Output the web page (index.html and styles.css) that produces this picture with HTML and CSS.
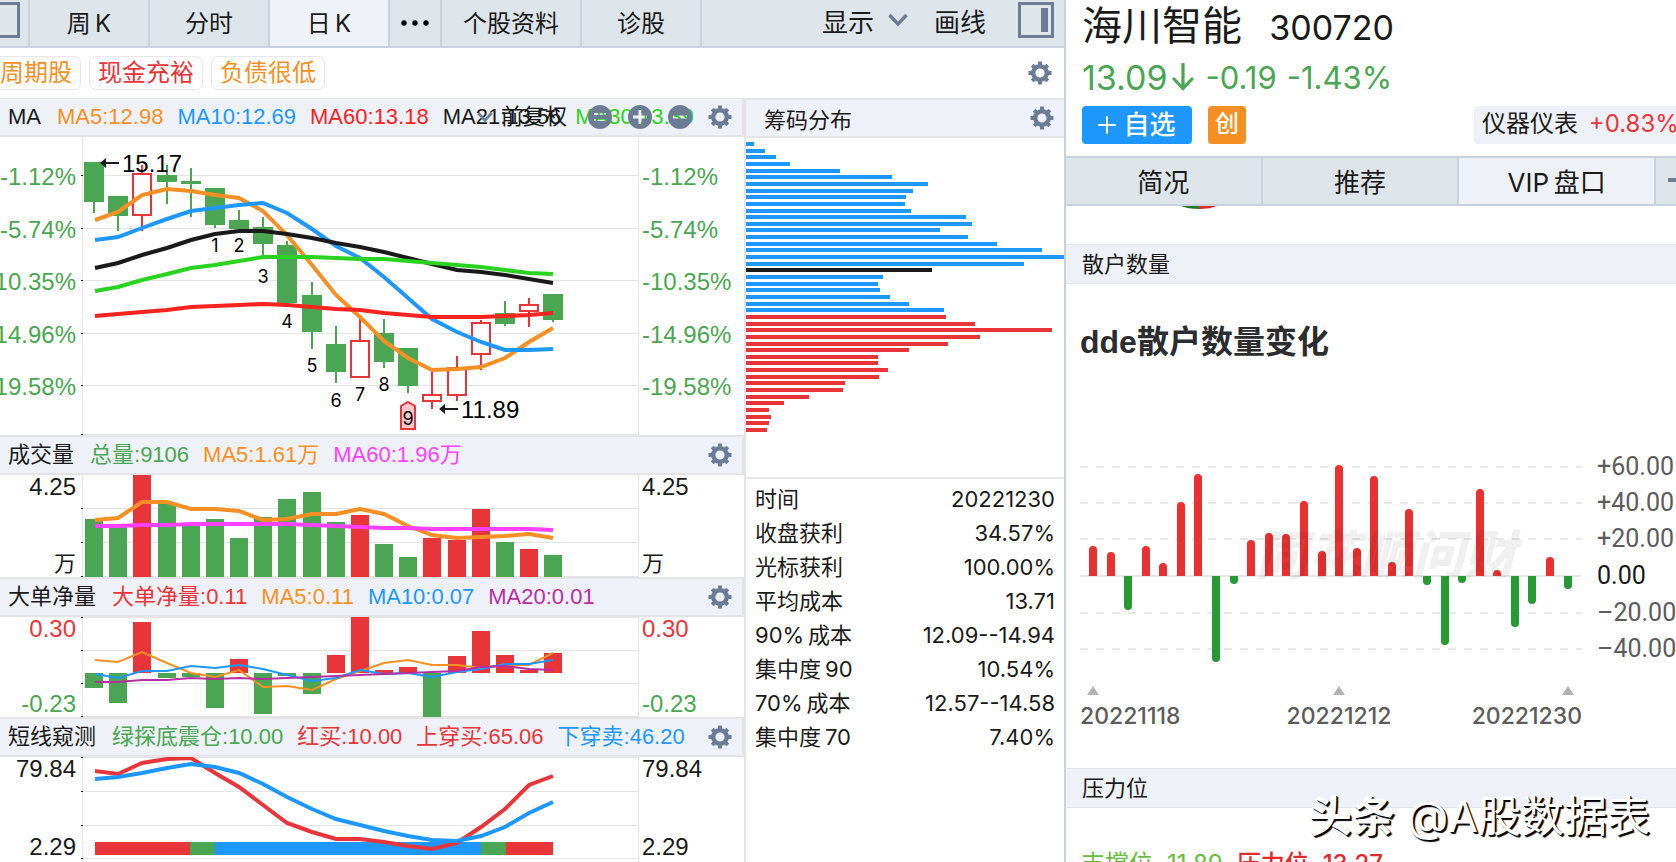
FILE: index.html
```
<!DOCTYPE html>
<html lang="zh-CN">
<head>
  <meta charset="UTF-8">
  <meta name="viewport" content="width=device-width, initial-scale=1.0">
  <title>海川智能 300720</title>
  <link rel="stylesheet" href="styles.css">
</head>
<body>
  <!-- 公用图标 -->
  <svg class="symbols" aria-hidden="true">
    <symbol id="gear" viewBox="0 0 24 24">
      <circle cx="12" cy="12" r="6.8" fill="none" stroke="currentColor" stroke-width="4.4"/>
      <path d="M12 .5v5M12 18.500v5M.5 12h5M18.500 12h5M4.200 4.200l3 3M16.800 16.800l3 3M19.800 4.200l-3 3M7.200 16.800l-3 3" stroke="currentColor" stroke-width="4"/>
    </symbol>
    <symbol id="chevron" viewBox="0 0 20 14">
      <path d="M1.500 2l8.500 9 8.500-9" fill="none" stroke="currentColor" stroke-width="3.400"/>
    </symbol>
  </svg>

  <div class="page">
    <main class="left">
      <nav class="toolbar">
        <button class="side-btn" aria-label="左侧栏">
          <svg width="36" height="36" viewBox="0 0 36 36"><path d="M1.500 1.500h33v33h-33z" fill="none" stroke="#6c7c95" stroke-width="3"/></svg>
        </button>
        <button class="tab">周&thinsp;K</button>
        <button class="tab">分时</button>
        <button class="tab active">日&thinsp;K</button>
        <button class="tab more" aria-label="更多">
          <svg width="30" height="8" viewBox="0 0 30 8"><circle cx="4" cy="4" r="2.700"/><circle cx="15" cy="4" r="2.700"/><circle cx="26" cy="4" r="2.700"/></svg>
        </button>
        <button class="tab wide">个股资料</button>
        <button class="tab">诊股</button>
        <div class="tools">
          <button class="tool">显示 <svg class="chevron" width="20" height="14"><use href="#chevron"/></svg></button>
          <button class="tool">画线</button>
          <button class="tool" aria-label="右侧栏">
            <svg width="36" height="36" viewBox="0 0 36 36"><path d="M1.500 1.500h33v33h-33z" fill="none" stroke="#6c7c95" stroke-width="3"/><path d="M23 6h7v24h-7z" fill="#6c7c95"/></svg>
          </button>
        </div>
      </nav>

      <div class="tags">
        <a class="tag orange" href="#">周期股</a>
        <a class="tag red" href="#">现金充裕</a>
        <a class="tag orange" href="#">负债很低</a>
        <button class="gear" aria-label="标签设置"><svg width="24" height="24"><use href="#gear"/></svg></button>
      </div>

      <div class="content">
        <div class="charts">
          <section class="panel price">
            <header class="panel-head">
              <h2>MA</h2>
              <span class="orange">MA5:12.98</span>
              <span class="blue">MA10:12.69</span>
              <span class="pure-red">MA60:13.18</span>
              <span class="black">MA21:13.56</span>
              <span class="lime">MA30:13.39</span>
              <div class="head-tools">
                <svg class="chevron" width="16" height="12"><use href="#chevron"/></svg>
                <select aria-label="复权方式"><option>前复权</option></select>
                <button class="round" aria-label="重置"><svg width="24" height="24"><path fill-rule="evenodd" d="M12 0a12 12 0 1 1 0 24a12 12 0 1 1 0-24zM6 8v2h12V8zM6 14v2h12v-2z"/></svg></button>
                <button class="round" aria-label="放大"><svg width="24" height="24"><path fill-rule="evenodd" d="M12 0a12 12 0 1 1 0 24a12 12 0 1 1 0-24zM10.500 5v5.500H5v3h5.500V19h3v-5.500H19v-3h-5.500V5z"/></svg></button>
                <button class="round" aria-label="缩小"><svg width="24" height="24"><path fill-rule="evenodd" d="M12 0a12 12 0 1 1 0 24a12 12 0 1 1 0-24zM5 10.500v3h14v-3z"/></svg></button>
              </div>
              <button class="gear" aria-label="均线设置"><svg width="24" height="24"><use href="#gear"/></svg></button>
            </header>
            <div class="body">
              <div class="axis green"><span>-1.12%</span><span>-5.74%</span><span>-10.35%</span><span>-14.96%</span><span>-19.58%</span></div>
              <div class="plot"><svg id="price"></svg></div>
              <div class="axis axis-right green"><span>-1.12%</span><span>-5.74%</span><span>-10.35%</span><span>-14.96%</span><span>-19.58%</span></div>
            </div>
          </section>

          <section class="panel volume">
            <header class="panel-head">
              <h2>成交量</h2>
              <span class="green">总量:9106</span>
              <span class="orange">MA5:1.61万</span>
              <span class="magenta">MA60:1.96万</span>
              <button class="gear" aria-label="成交量设置"><svg width="24" height="24"><use href="#gear"/></svg></button>
            </header>
            <div class="body">
              <div class="axis"><span>4.25</span><span class="unit">万</span></div>
              <div class="plot"><svg id="volume"></svg></div>
              <div class="axis axis-right"><span>4.25</span><span class="unit">万</span></div>
            </div>
          </section>

          <section class="panel net">
            <header class="panel-head">
              <h2>大单净量</h2>
              <span class="red">大单净量:0.11</span>
              <span class="orange">MA5:0.11</span>
              <span class="blue">MA10:0.07</span>
              <span class="purple">MA20:0.01</span>
              <button class="gear" aria-label="大单净量设置"><svg width="24" height="24"><use href="#gear"/></svg></button>
            </header>
            <div class="body">
              <div class="axis"><span class="red">0.30</span><span class="green">-0.23</span></div>
              <div class="plot"><svg id="net"></svg></div>
              <div class="axis axis-right"><span class="red">0.30</span><span class="green">-0.23</span></div>
            </div>
          </section>

          <section class="panel short">
            <header class="panel-head">
              <h2>短线窥测</h2>
              <span class="green">绿探底震仓:10.00</span>
              <span class="red">红买:10.00</span>
              <span class="red">上穿买:65.06</span>
              <span class="blue">下穿卖:46.20</span>
              <button class="gear" aria-label="短线窥测设置"><svg width="24" height="24"><use href="#gear"/></svg></button>
            </header>
            <div class="body">
              <div class="axis"><span>79.84</span><span>2.29</span></div>
              <div class="plot"><svg id="short"></svg></div>
              <div class="axis axis-right"><span>79.84</span><span>2.29</span></div>
            </div>
          </section>
        </div>

        <aside class="chips">
          <header class="chips-head">
            <h2>筹码分布</h2>
            <button class="gear" aria-label="筹码设置"><svg width="24" height="24"><use href="#gear"/></svg></button>
          </header>
          <div class="chips-plot"><svg id="chips"></svg></div>
          <div class="chips-info">
            <table>
              <tr><th scope="row">时间</th><td>20221230</td></tr>
              <tr><th scope="row">收盘获利</th><td>34.57%</td></tr>
              <tr><th scope="row">光标获利</th><td>100.00%</td></tr>
              <tr><th scope="row">平均成本</th><td>13.71</td></tr>
              <tr><th scope="row">90%&thinsp;成本</th><td>12.09--14.94</td></tr>
              <tr><th scope="row">集中度&thinsp;90</th><td>10.54%</td></tr>
              <tr><th scope="row">70%&thinsp;成本</th><td>12.57--14.58</td></tr>
              <tr><th scope="row">集中度&thinsp;70</th><td>7.40%</td></tr>
            </table>
          </div>
        </aside>
      </div>
    </main>

    <aside class="right">
      <div class="stock">
        <h1>海川智能 <span class="code">300720</span></h1>
        <div class="quote">
          <span class="last">13.09</span>
          <svg width="22" height="28" viewBox="0 0 22 28"><path d="M11 1v24M2 16l9 9.500 9-9.500" fill="none" stroke="#4aa653" stroke-width="3.200" stroke-linecap="round"/></svg>
          <span class="change">-0.19</span>
          <span class="change">-1.43%</span>
        </div>
        <div class="actions">
          <button class="add"><svg width="18" height="18" viewBox="0 0 18 18"><path d="M9 0v18M0 9h18" stroke="#fff" stroke-width="2"/></svg>自选</button>
          <span class="badge">创</span>
          <a class="industry" href="#">仪器仪表 <span class="red">+0.83%</span></a>
        </div>
      </div>
      <nav class="sub-tabs">
        <button>简况</button>
        <button>推荐</button>
        <button class="active">VIP&thinsp;盘口</button>
        <button class="last-tab" aria-label="更多"><svg width="14" height="4"><path d="M0 0h14v4H0z" fill="#6c7c95"/></svg></button>
      </nav>
      <div class="gauge">
        <svg width="40" height="3" viewBox="0 0 40 3"><path d="M2 0h18v3Q9 3 2 0z" fill="#1c7a2c"/><path d="M38 0H20v3Q31 3 38 0z" fill="#e02a2e"/></svg>
      </div>
      <h2 class="section-title">散户数量</h2>
      <h3 class="dde-title">dde散户数量变化</h3>
      <div class="dde-plot"><svg id="dde"></svg></div>
      <h2 class="section-title">压力位</h2>
      <div class="levels">
        <span class="support">支撑位</span> <span class="support">11.89</span>
        <span class="pressure">压力位</span> <span class="pressure">13.27</span>
      </div>
    </aside>
    <div class="watermark"><b>头条</b> @A股数据表</div>
  </div>
  <script src="charts.js"></script>
</body>
</html>
```

FILE: styles.css
```
* {
  box-sizing: border-box;
}
body {
  margin: 0;
  font-family: "Inter", "Noto Sans CJK SC", sans-serif;
  color: #1a1a1a;
  background-color: #fff;
}
h1, h2, h3 {
  margin: 0;
  font-weight: 400;
}
button, select {
  margin: 0;
  padding: 0;
  border: 0;
  background: none;
  font: inherit;
  color: inherit;
  cursor: pointer;
}
a {
  color: inherit;
  text-decoration: none;
}
svg {
  display: block;
}
.symbols {
  position: absolute;
  width: 0;
  height: 0;
}

/* 颜色 */
.green { color: #4aa653; }
.red { color: #e8353a; }
.pure-red { color: #f8221e; }
.orange { color: #f69024; }
.blue { color: #1e98ff; }
.black { color: #1a1a1a; }
.lime { color: #2bd321; }
.magenta { color: #ff40ff; }
.purple { color: #b52fa0; }

.page {
  position: relative;
  display: grid;
  grid-template-columns: 1066fr 610fr;
  height: 100vh;
  overflow: hidden;
}
.left {
  display: flex;
  flex-direction: column;
  min-width: 0;
  min-height: 0;
  border-right: 2px solid #c8d1dc;
}

/* 顶部工具栏 */
.toolbar {
  display: flex;
  height: 48px;
  flex: none;
  border-bottom: 2px solid #c8d1dc;
  background-color: #dee5ea;
  font-size: 24px;
}
.side-btn {
  width: 30px;
  overflow: hidden;
  border-right: 2px solid #c8d1dc;
}
.side-btn svg {
  margin: 0 0 6px -16px;
}
.tab {
  width: 120px;
  padding-bottom: 3px;
  border-right: 2px solid #c8d1dc;
}
.tab.wide {
  width: 140px;
}
.tab.more {
  display: flex;
  align-items: center;
  justify-content: center;
  width: 52px;
  padding-bottom: 0;
}
.tab.active {
  background-color: #eef1f7;
}
.tools {
  display: flex;
  align-items: center;
  gap: 26px;
  margin-left: auto;
  padding: 0 10px 6px 0;
  font-size: 26px;
}
.tool {
  display: flex;
  align-items: center;
  gap: 14px;
}
.tool:last-child {
  margin-left: 6px;
}
.chevron {
  color: #6c7c95;
}

.tags {
  display: flex;
  align-items: center;
  gap: 8px;
  flex: none;
  height: 50px;
  padding-right: 12px;
  font-size: 24px;
}
.tag {
  height: 34px;
  padding: 0 8px;
  border: 1px solid #e6e7ea;
  border-radius: 7px;
  line-height: 32px;
}
.tag:first-child {
  margin-left: -9px;
}
.gear {
  margin-left: auto;
  color: #6c7c95;
}

.content {
  display: grid;
  grid-template-columns: 744fr 320fr;
  flex: 1;
  min-height: 0;
}
.charts {
  display: flex;
  flex-direction: column;
  min-width: 0;
}

/* 指标面板 */
.panel {
  display: flex;
  flex-direction: column;
  min-height: 0;
  flex-basis: 40px;
}
.price { flex-grow: 298; flex-basis: 39px; }
.volume { flex-grow: 102; }
.net { flex-grow: 100; }
.short { flex-grow: 105; }
.panel-head {
  position: relative;
  display: flex;
  align-items: center;
  gap: 14px;
  flex: none;
  height: 40px;
  padding: 0 10px 0 8px;
  border: solid #e4e4e6;
  border-width: 2px 2px 2px 0;
  background-color: #eef1f7;
  font-family: "Liberation Sans", "Noto Sans CJK SC", sans-serif;
  font-size: 22px;
  line-height: 32px;
  white-space: nowrap;
}
.price .panel-head {
  height: 39px;
  border-top-width: 1px;
}
.panel-head h2 {
  margin-right: 2px;
  font-size: 22px;
}
.head-tools {
  position: absolute;
  right: 50px;
  display: flex;
  align-items: center;
  gap: 16px;
}
.head-tools .chevron {
  margin-right: -8px;
}
.head-tools select {
  margin-right: 4px;
  appearance: none;
}
.round {
  fill: #6c7c95;
}
.body {
  display: flex;
  flex: 1;
  min-height: 0;
}
.axis {
  display: flex;
  flex-direction: column;
  align-items: flex-end;
  justify-content: space-between;
  flex: none;
  width: 82px;
  padding: 0 6px 1px 0;
  font-family: "Liberation Sans", "Noto Sans CJK SC", sans-serif;
  font-size: 24px;
  line-height: 24px;
}
.axis .unit {
  font-size: 22px;
}
.axis-right {
  align-items: flex-start;
  width: 105px;
  padding: 0 0 1px 3px;
}
.price .axis {
  padding-top: 28px;
  padding-bottom: 36px;
}
.short .axis {
  padding-bottom: 3px;
}
.plot {
  flex: 1;
  min-width: 0;
  border: solid #e4e4e6;
  border-width: 0 1px;
}
.plot svg,
.chips-plot svg,
.dde-plot svg {
  width: 100%;
  height: 100%;
}
.plot svg {
  overflow: visible;
}

/* 筹码分布 */
.chips {
  display: flex;
  flex-direction: column;
  min-height: 0;
  border-left: 2px solid #e4e4e6;
}
.chips-head {
  display: flex;
  align-items: center;
  flex: none;
  height: 40px;
  padding: 0 10px 0 18px;
  border: solid #e4e4e6;
  border-width: 2px 0;
  background-color: #eef1f7;
}
.chips-head h2 {
  font-size: 22px;
}
.chips-plot {
  flex: 339 0 0;
  min-height: 0;
}
.chips-info {
  flex: 377 0 0;
  padding: 3px 9px;
  border-top: 2px solid #e4e4e6;
}
.chips-info table {
  width: 100%;
  border-collapse: collapse;
  font-size: 22px;
  line-height: 34px;
}
.chips-info th,
.chips-info td {
  height: 34px;
  padding: 0;
  font-weight: 400;
  text-align: left;
}
.chips-info td {
  text-align: right;
}

/* 右侧个股信息 */
.right {
  display: flex;
  flex-direction: column;
  min-width: 0;
  min-height: 0;
  overflow: hidden;
}
.stock {
  flex: none;
  padding: 0 0 12px 16px;
}
.stock h1 {
  height: 52px;
  font-size: 40px;
  line-height: 52px;
}
.stock .code {
  margin-left: 16px;
  font-size: 34px;
}
.quote {
  display: flex;
  align-items: center;
  height: 54px;
  padding-bottom: 4px;
  color: #4aa653;
}
.quote svg {
  margin: 0 12px 0 4px;
}
.last {
  font-size: 34px;
}
.change {
  margin-right: 10px;
  font-size: 31px;
}
.actions {
  display: flex;
  height: 38px;
  font-size: 24px;
  line-height: 36px;
}
.add {
  display: flex;
  align-items: center;
  justify-content: center;
  gap: 7px;
  width: 110px;
  border-radius: 4px;
  background-color: #1e98ff;
  font-size: 26px;
  font-weight: 500;
  color: #fff;
}
.badge {
  width: 38px;
  margin-left: 16px;
  border-radius: 4px;
  background-color: #f69024;
  font-weight: 500;
  text-align: center;
  color: #fff;
}
.industry {
  width: 202px;
  margin-left: auto;
  padding-left: 8px;
  overflow: hidden;
  border-radius: 4px 0 0 4px;
  background-color: #eef1f7;
  white-space: nowrap;
}
.industry .red {
  margin-left: 4px;
}
.sub-tabs {
  display: flex;
  flex: none;
  height: 50px;
  border: solid #c8d1dc;
  border-width: 2px 0;
  background-color: #dee5ea;
  font-size: 26px;
}
.sub-tabs button {
  flex: 1;
  padding-bottom: 2px;
  border-right: 2px solid #c8d1dc;
}
.sub-tabs .active {
  background-color: #eef1f7;
}
.sub-tabs .last-tab {
  display: flex;
  align-items: center;
  flex: none;
  width: 20px;
  padding-left: 12px;
  overflow: hidden;
  border-right: 0;
}
.last-tab svg {
  flex: none;
}
.gauge {
  flex: none;
  height: 38px;
  padding-left: 113px;
}
.section-title {
  flex: none;
  padding-left: 16px;
  border: solid #e0e5ea;
  border-width: 1px 0;
  background-color: #eef1f7;
  font-size: 22px;
  line-height: 38px;
}
.dde-title {
  flex: none;
  padding: 38px 0 18px 14px;
  font-family: "Liberation Sans", "Noto Sans CJK SC", sans-serif;
  font-size: 32px;
  font-weight: 700;
  line-height: 40px;
  color: #2b2d2e;
}
.dde-plot {
  flex: 1;
  min-height: 300px;
}
.levels {
  display: flex;
  flex: none;
  gap: 14px;
  height: 54px;
  padding: 40px 0 0 15px;
  font-size: 24px;
  line-height: 32px;
  white-space: nowrap;
}
.levels .pressure {
  font-weight: 500;
  color: #e02a2e;
}
.levels .support {
  color: #67bd3c;
}
.watermark {
  position: absolute;
  right: 26px;
  bottom: 16px;
  font-size: 43px;
  line-height: 60px;
  color: #fff;
  text-shadow: 2px 2px 1px #000, 1px 1px 0 #000;
}
.watermark b {
  font-weight: 700;
}

/* 图内文字 */
.count {
  font-size: 18px;
  text-anchor: middle;
}
.mark {
  font-family: "Liberation Sans", sans-serif;
  font-size: 24px;
}
.tick-label {
  font-family: "Roboto", sans-serif;
  font-size: 25px;
  fill: #5c5c5c;
}
.tick-label.zero {
  fill: #1a1a1a;
}
.date-label {
  font-size: 23px;
  font-weight: 500;
  fill: #5c5c5c;
}
.plot-mark {
  font-size: 52px;
  font-style: italic;
  font-weight: 900;
  fill: rgba(0, 0, 0, .06);
}
```

FILE: charts.js
```
var RED = "#e8353a"
var GREEN = "#4aa653"
var GRID = "#e4e4e6"

// 在svg中添加一个元素
function add(svg, name, attrs, text) {
  var el = document.createElementNS("http://www.w3.org/2000/svg", name)
  for (var key in attrs) {
    el.setAttribute(key, attrs[key])
  }
  if (text) el.textContent = text
  svg.appendChild(el)
  return el
}

// 清空画布，返回按设计尺寸缩放坐标的函数
function setup(id, width, height) {
  var svg = document.getElementById(id)
  svg.innerHTML = ""
  var box = svg.getBoundingClientRect()
  return {
    svg: svg,
    w: box.width,
    h: box.height,
    x: function(v) { return Math.round(v * box.width / width) },
    y: function(v) { return Math.round(v * box.height / height) }
  }
}

function rect(c, x, y, w, h, fill) {
  add(c.svg, "rect", { x: x, y: y, width: w, height: h, fill: fill })
}

// 横向网格线和左侧刻度
function grid(c, lines) {
  lines.forEach(function(v) {
    rect(c, 0, c.y(v), c.w, 1, GRID)
    rect(c, -2, c.y(v), 2, 1, "#1a1a1a")
  })
}

// 第i根K线的中心
function center(i) {
  return 11 + i * 24.17
}

function line(c, values, color, width) {
  var points = values.map(function(v, i) {
    return c.x(center(i) + (i === 0 ? 1 : 0)) + "," + c.y(v)
  })
  add(c.svg, "polyline", { points: points.join(" "), fill: "none", stroke: color, "stroke-width": width })
}

function drawPrice() {
  var c = setup("price", 555, 298)
  grid(c, [38, 91, 143, 196, 248, 297])
  // 颜色、最高、实体上、实体下、最低
  var candles = [
    ["g", 25, 25, 65, 76], ["g", 59, 59, 79, 94], ["r", 28, 36, 79, 94], ["g", 28, 38, 45, 67],
    ["g", 31, 44, 47, 80], ["g", 51, 51, 88, 91], ["g", 73, 83, 92, 92], ["g", 80, 90, 107, 120],
    ["g", 104, 108, 166, 167], ["g", 145, 158, 195, 212], ["g", 189, 207, 235, 246], ["r", 181, 203, 241, 241],
    ["g", 182, 196, 225, 231], ["g", 211, 211, 249, 256], ["r", 234, 257, 265, 272], ["r", 219, 230, 259, 264],
    ["r", 183, 185, 218, 233], ["g", 164, 176, 187, 189], ["r", 161, 167, 175, 190], ["g", 157, 157, 183, 185]
  ]
  candles.forEach(function(k, i) {
    var x = c.x(center(i))
    var top = c.y(k[2])
    var bottom = c.y(k[3])
    if (k[0] === "g") {
      rect(c, x - 1, c.y(k[1]), 2, c.y(k[4]) - c.y(k[1]), GREEN)
      rect(c, x - 10, top, 20, bottom - top, GREEN)
    } else {
      rect(c, x - 1, c.y(k[1]), 2, top - c.y(k[1]), RED)
      rect(c, x - 1, bottom, 2, c.y(k[4]) - bottom, RED)
      add(c.svg, "rect", { x: x - 9, y: top + 1, width: 18, height: bottom - top - 2, fill: "#fff", stroke: RED, "stroke-width": 2 })
    }
  })

  line(c, [83, 75, 58, 52, 54, 58, 61, 74, 98, 128, 158, 180, 204, 221, 233, 232, 230, 221, 205, 191], "#f69024", 4)
  line(c, [103, 100, 91, 82, 74, 71, 68, 66, 76, 92, 109, 121, 140, 161, 182, 195, 205, 213, 213, 212], "#1e98ff", 4)
  line(c, [131, 126, 118, 111, 103, 97, 94, 94, 97, 101, 106, 110, 115, 121, 127, 133, 135, 138, 142, 146], "#1a1a1a", 4)
  line(c, [154, 150, 143, 137, 131, 128, 124, 120, 120, 120, 121, 122, 122, 124, 126, 128, 130, 133, 136, 137], "#2bd321", 4)
  line(c, [179, 177, 175, 173, 170, 169, 168, 167, 168, 170, 172, 173, 176, 178, 180, 180, 180, 179, 178, 176], "#f8221e", 4)

  // 九转数字
  var last = c.x(center(13))
  var tip = c.y(265)
  add(c.svg, "path", { d: "M" + last + " " + tip + "l7 4v23h-14v-23z", fill: "#f8c8ca", stroke: RED, "stroke-width": 2 })
  var counts = [115, 115, 146, 191, 235, 270, 264, 254, 288]
  counts.forEach(function(v, i) {
    add(c.svg, "text", { x: c.x(center(i + 5)), y: c.y(v), "class": "count" }, String(i + 1))
  })

  // 最高价和最低价
  mark(c, 17, 26, 35, "15.17")
  mark(c, 356, 272, 281, "11.89")
}

function mark(c, x, y, baseline, text) {
  var left = c.x(x)
  var top = c.y(y)
  add(c.svg, "path", { d: "M" + left + " " + top + "l6-5v4h13v2h-13v4z", fill: "#1a1a1a" })
  add(c.svg, "text", { x: left + 22, y: c.y(baseline), "class": "mark" }, text)
}

function drawVolume() {
  var c = setup("volume", 555, 102)
  grid(c, [33, 67, 101])
  var tops = [44, 49, 0, 28, 50, 44, 63, 42, 24, 17, 47, 40, 69, 82, 63, 65, 34, 67, 74, 80]
  var reds = [2, 11, 14, 15, 16, 18]
  tops.forEach(function(v, i) {
    rect(c, c.x(center(i)) - 9, c.y(v), 18, c.h - c.y(v), reds.includes(i) ? RED : GREEN)
  })
  line(c, [45, 43, 27, 27, 34, 34, 36, 45, 44, 39, 39, 34, 39, 51, 60, 63, 62, 61, 59, 63], "#f69024", 4)
  line(c, [51, 51, 50, 50, 49, 49, 49, 49, 49, 50, 51, 52, 53, 53, 54, 54, 54, 54, 54, 55], "#ff40ff", 4)
}

function drawNet() {
  var c = setup("net", 555, 100)
  grid(c, [0, 33, 66, 99])
  // 零轴在56，红柱向上，绿柱向下
  var ends = [71, 86, 5, 61, 60, 91, 42, 97, 59, 77, 38, 0, 53, 50, 100, 39, 14, 38, 53, 36]
  ends.forEach(function(v, i) {
    var zero = c.y(56)
    var end = c.y(v)
    rect(c, c.x(center(i)) - 9, Math.min(zero, end), 18, Math.abs(end - zero), v < 56 ? RED : GREEN)
  })
  line(c, [43, 45, 35, 46, 56, 60, 53, 70, 69, 73, 62, 54, 46, 43, 48, 48, 51, 48, 48, 36], "#f69024", 2)
  line(c, [57, 61, 54, 54, 49, 51, 48, 52, 58, 64, 61, 53, 57, 56, 60, 55, 52, 47, 47, 43], "#1e98ff", 2)
  line(c, [65, 65, 63, 63, 61, 62, 61, 62, 61, 60, 59, 58, 57, 56, 55, 54, 50, 49, 52, 53], "#b52fa0", 2)
}

function drawShort() {
  var c = setup("short", 555, 105)
  grid(c, [0, 34, 68, 101])
  var strips = [[12, 107, RED], [107, 132, GREEN], [132, 398, "#1e98ff"], [398, 423, GREEN], [423, 470, RED]]
  strips.forEach(function(s) {
    rect(c, c.x(s[0]), c.y(85), c.x(s[1]) - c.x(s[0]), c.y(13), s[2])
  })
  line(c, [14, 17, 6, 2, 1, 16, 30, 48, 66, 75, 82, 82, 85, 89, 92, 86, 70, 52, 28, 19], RED, 4)
  line(c, [22, 20, 16, 11, 7, 10, 16, 27, 40, 52, 62, 68, 74, 79, 83, 84, 79, 70, 56, 45], "#1e98ff", 4)
}

function drawChips() {
  var c = setup("chips", 318, 339)
  var widths = [
    8, 19, 30, 44, 94, 146, 182, 167, 160, 159, 165, 220, 226, 194, 222, 251, 296, 318, 278, 186, 137, 132,
    134, 144, 163, 198, 200, 229, 306, 234, 202, 163, 132, 132, 142, 133, 99, 97, 63, 38, 23, 25, 23, 21
  ]
  widths.forEach(function(v, i) {
    var color = i < 26 ? "#1e98ff" : RED
    if (i === 19) color = "#1a1a1a"
    rect(c, 0, c.y(4 + i * 6.65), c.x(v), 4, color)
  })
}

function drawDde() {
  var c = setup("dde", 610, 388)
  var ticks = [[87, "+60.00"], [123, "+40.00"], [159, "+20.00"], [196, "0.00"], [233, "–20.00"], [269, "–40.00"]]
  ticks.forEach(function(t) {
    var y = c.y(t[0])
    var zero = t[1] === "0.00"
    var attrs = { d: "M" + c.x(14) + " " + y + "H" + c.x(516), stroke: "#e8e8e8", "stroke-width": 2 }
    if (!zero) attrs["stroke-dasharray"] = "8 8"
    add(c.svg, "path", attrs)
    add(c.svg, "text", { x: c.x(531), y: y + 8, "class": zero ? "tick-label zero" : "tick-label" }, t[1])
  })

  var values = [30, 24, -34, 30, 13, 74, 102, -86, -8, 36, 43, 42, 75, 25, 111, 28, 100, 14, 67, -9, -69, -7, 87, 6, -51, -28, 19, -13]
  values.forEach(function(v, i) {
    var x = c.x(27 + i * 17.58)
    var zero = c.y(196)
    var tip = c.y(196 - v)
    var r = v > 0 ? 4 : -4
    add(c.svg, "path", {
      d: "M" + (x - 4) + " " + zero + "V" + (tip + r) + "q0 " + -r + " 4 " + -r + "t4 " + r + "V" + zero + "z",
      fill: v > 0 ? "#ea3030" : "#279a34"
    })
  })

  add(c.svg, "text", { x: c.x(190), y: c.y(194), "class": "plot-mark" }, "同花顺问财")

  var dates = [[27, 14, "start", "20221118"], [273, 273, "middle", "20221212"], [502, 516, "end", "20221230"]]
  dates.forEach(function(d) {
    var x = c.x(d[0])
    add(c.svg, "path", { d: "M" + x + " " + c.y(306) + "l6 9h-12z", fill: "#b3b3b3" })
    add(c.svg, "text", { x: c.x(d[1]), y: c.y(344), "text-anchor": d[2], "class": "date-label" }, d[3])
  })
}

function draw() {
  drawPrice()
  drawVolume()
  drawNet()
  drawShort()
  drawChips()
  drawDde()
}

draw()
window.addEventListener("resize", draw)
```
